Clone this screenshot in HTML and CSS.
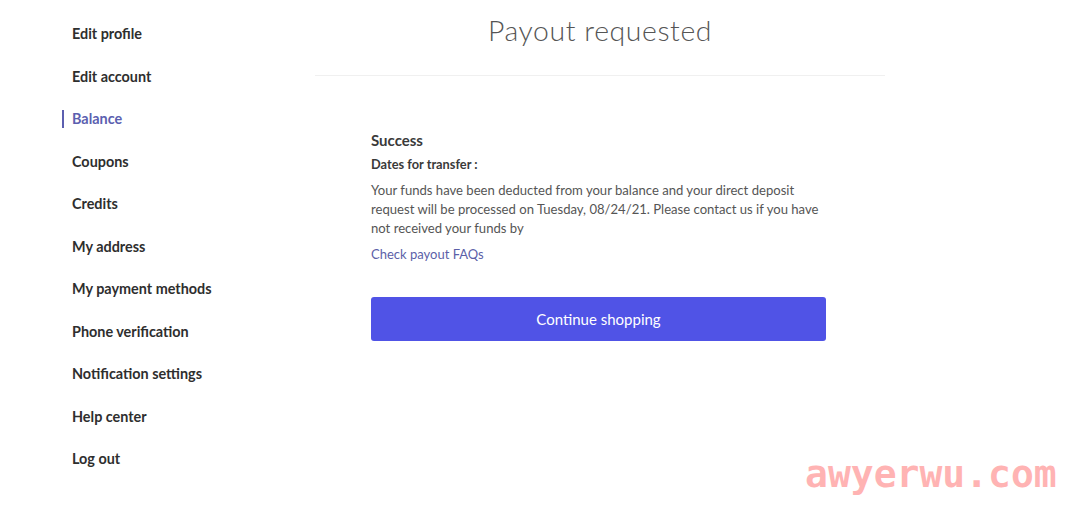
FILE: index.html
```html
<!DOCTYPE html>
<html lang="en">

<head>
    <meta charset="UTF-8">
    <meta name="viewport" content="width=device-width, initial-scale=1.0">
    <title>Payout requested</title>
    <link rel="stylesheet" href="styles.css">
</head>

<body>
    <div class="page">
        <nav class="sidebar">
            <a href="#">Edit profile</a>
            <a href="#">Edit account</a>
            <a href="#" class="active">Balance</a>
            <a href="#">Coupons</a>
            <a href="#">Credits</a>
            <a href="#">My address</a>
            <a href="#">My payment methods</a>
            <a href="#">Phone verification</a>
            <a href="#">Notification settings</a>
            <a href="#">Help center</a>
            <a href="#">Log out</a>
        </nav>

        <main class="main">
            <h1 class="title">Payout requested</h1>
            <div class="content">
                <h2 class="status">Success</h2>
                <p class="dates">Dates for transfer :</p>
                <p class="message">Your funds have been deducted from your balance and your direct deposit<br>
                    request will be processed on Tuesday, 08/24/21. Please contact us if you have<br>
                    not received your funds by</p>
                <a href="#" class="faq">Check payout FAQs</a>
                <button class="continue">Continue shopping</button>
            </div>
        </main>
    </div>

    <div class="watermark">awyerwu.com</div>
</body>

</html>
```

FILE: styles.css
```css
body {
    font-family: Lato, "Noto Sans", sans-serif;
    margin: 0;
    padding: 0;
    background: white;
    color: #2b2b2b;
    height: 507px;
    overflow: hidden;
}

.page {
    display: flex;
}

.sidebar {
    display: flex;
    flex-direction: column;
    width: 315px;
    padding-top: 24px;
    flex-shrink: 0;
}

.sidebar a {
    display: block;
    padding-left: 72px;
    height: 42.5px;
    font-size: 14.4px;
    font-weight: 700;
    color: #2e2e2e;
    text-decoration: none;
    line-height: 20px;
    position: relative;
}

.sidebar a.active {
    color: #5c5fb0;
}

.sidebar a.active::before {
    content: "";
    position: absolute;
    left: 62px;
    top: 1px;
    width: 2px;
    height: 18px;
    background: #5c5fb0;
}

.main {
    width: 570px;
}

.title {
    margin: 0;
    padding-top: 13px;
    padding-bottom: 34px;
    height: 28px;
    border-bottom: 1px solid #f0f0f0;
    text-align: center;
    font-size: 28.4px;
    font-weight: 300;
    letter-spacing: 0.6px;
    color: #555;
    line-height: 34px;
}

.content {
    width: 455px;
    margin: 0 0 0 56px;
    padding-top: 54px;
}

.status {
    margin: 0;
    font-size: 15px;
    font-weight: 700;
    color: #3a3a3a;
    line-height: 20px;
}

.dates {
    margin: 5px 0 0;
    font-size: 12.8px;
    font-weight: 700;
    color: #3a3a3a;
    line-height: 18px;
}

.message {
    margin: 8px 0 0;
    font-size: 13.1px;
    color: #555;
    line-height: 19px;
    white-space: nowrap;
}

.faq {
    display: block;
    margin-top: 7px;
    font-size: 13px;
    color: #5c5fa8;
    text-decoration: none;
    line-height: 18px;
}

.continue {
    display: block;
    width: 100%;
    height: 44px;
    margin-top: 34px;
    background: #5053e6;
    color: white;
    border: none;
    border-radius: 3px;
    font-family: inherit;
    font-size: 15px;
    cursor: pointer;
}

.watermark {
    position: absolute;
    left: 805px;
    top: 455px;
    font-family: "DejaVu Sans Mono", monospace;
    font-size: 38px;
    font-weight: 700;
    line-height: 1;
    color: #ffb3b3;
}
```
